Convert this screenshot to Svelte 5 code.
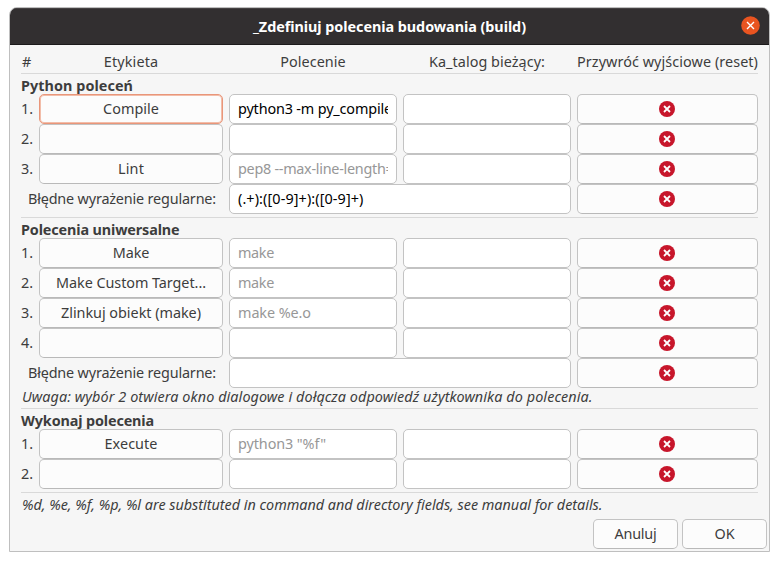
<script>
  const sections = [
    {
      title: 'Python poleceń', titleWidth: 112,
      rows: [
        { n: '1.', label: 'Compile', lw: 56, cmd: 'python3 -m py_compile', cw: 154, focused: true },
        { n: '2.', label: '', cmd: '' },
        { n: '3.', label: 'Lint', lw: 26, cmd: 'pep8 --max-line-length=', cw: 155.5, hint: true },
      ],
      regex: '(.+):([0-9]+):([0-9]+)', regexWidth: 125.5, hasRegex: true,
    },
    {
      title: 'Polecenia uniwersalne', titleWidth: 158.5,
      rows: [
        { n: '1.', label: 'Make', lw: 36.5, cmd: 'make', cw: 36, hint: true },
        { n: '2.', label: 'Make Custom Target...', lw: 150, cmd: 'make', cw: 36, hint: true },
        { n: '3.', label: 'Zlinkuj obiekt (make)', lw: 140, cmd: 'make %e.o', cw: 73, hint: true },
        { n: '4.', label: '', cmd: '' },
      ],
      regex: '', hasRegex: true,
      note: 'Uwaga: wybór 2 otwiera okno dialogowe i dołącza odpowiedź użytkownika do polecenia.', noteWidth: 570.5,
    },
    {
      title: 'Wykonaj polecenia', titleWidth: 133,
      rows: [
        { n: '1.', label: 'Execute', lw: 53, cmd: 'python3 "%f"', cw: 88, hint: true },
        { n: '2.', label: '', cmd: '' },
      ],
      hasRegex: false,
    },
  ];

  // Tracks the letters of a label so that it takes up the given advance width.
  function track(node, width) {
    if (!width) return;
    const natural = node.getBoundingClientRect().width;
    const count = [...node.textContent].length;
    if (count) node.style.letterSpacing = `${(width - natural) / count}px`;
  }
</script>

{#snippet text(value, width)}<span class="text" use:track={width}>{value}</span>{/snippet}

{#snippet reset()}
  <button class="btn reset" aria-label="reset">
    <svg width="16" height="16" viewBox="0 0 16 16">
      <circle cx="8" cy="8" r="8" fill="#c7162b" />
      <path d="M5 5l6 6M11 5l-6 6" stroke="#fff" stroke-width="1.8" />
    </svg>
  </button>
{/snippet}

<div class="window">
  <header>
    <h1>{@render text('_Zdefiniuj polecenia budowania (build)', 273)}</h1>
    <button class="close" aria-label="close">
      <svg width="19" height="19" viewBox="0 0 19 19">
        <circle cx="9.5" cy="9.5" r="9.3" fill="#e95420" />
        <path d="M6 6l7 7M13 6l-7 7" stroke="#fff" stroke-width="1.4" />
      </svg>
    </button>
  </header>

  <main>
    <div class="grid head">
      <span class="num">#</span>
      <span>{@render text('Etykieta', 54.5)}</span>
      <span>{@render text('Polecenie', 65.5)}</span>
      <span>{@render text('Ka_talog bieżący:', 116)}</span>
      <span>{@render text('Przywróć wyjściowe (reset)', 181)}</span>
    </div>
    {#each sections as s}
      <section>
        <h2>{@render text(s.title, s.titleWidth)}</h2>
        {#each s.rows as r}
          <div class="grid">
            <span class="num">{@render text(r.n, 12)}</span>
            <button class="btn" class:focused={r.focused}>{@render text(r.label, r.lw)}</button>
            <div class="entry" class:hint={r.hint}><div class="clip">{@render text(r.cmd, r.cw)}</div></div>
            <div class="entry"></div>
            {@render reset()}
          </div>
        {/each}
        {#if s.hasRegex}
          <div class="grid">
            <span class="regex-label">{@render text('Błędne wyrażenie regularne:', 188)}</span>
            <div class="entry wide"><div class="clip">{@render text(s.regex, s.regexWidth)}</div></div>
            {@render reset()}
          </div>
        {/if}
        {#if s.note}<p class="note">{@render text(s.note, s.noteWidth)}</p>{/if}
      </section>
    {/each}
    <p class="help">{@render text('%d, %e, %f, %p, %l are substituted in command and directory fields, see manual for details.', 580.5)}</p>
  </main>

  <footer>
    <button class="btn">{@render text('Anuluj', 42)}</button>
    <button class="btn">{@render text('OK', 20)}</button>
  </footer>
</div>

<style>
  :global(body) { background: #fff; }
  .window {
    box-sizing: border-box;
    width: 761px;
    height: 545px;
    margin: 7px 0 0 9px;
    border: 1px solid #bfbfbf;
    border-radius: 8px 8px 0 0;
    background: #f6f6f6;
    overflow: hidden;
    display: flex;
    flex-direction: column;
    font: 14.4px/20px "Noto Sans", "Open Sans", sans-serif;
    color: #3d3d3d;
  }
  h1, h2, p { margin: 0; font-size: inherit; }
  .text { white-space: pre; display: inline-block; }
  button { font: inherit; color: inherit; padding: 0; margin: 0; }
  header {
    box-sizing: border-box;
    height: 37px;
    flex: none;
    display: grid;
    grid-template-columns: 30px 1fr 30px;
    align-items: center;
    background: #322f30;
    border-bottom: 1px solid #1c1a1b;
    box-shadow: inset 0 1px #454243;
    color: #fff;
  }
  h1 { grid-column: 2; text-align: center; padding-top: 1px; }
  .close { border: 0; background: none; width: 19px; height: 19px; margin: -1px 0 0 2px; }
  svg { display: block; }
  main { padding: 0 11px; }
  .grid {
    display: grid;
    grid-template-columns: 12px 184px 168px 168px 181px;
    column-gap: 6px;
    height: 30px;
    align-items: center;
    text-align: center;
    white-space: nowrap;
  }
  .head { height: 28px; padding-top: 6px; box-sizing: border-box; }
  .head span { display: flex; justify-content: center; }
  .grid .num { text-align: left; justify-content: flex-start; }
  .head .num { padding-left: 1px; }
  section { border-top: 1px solid #d9d9d9; margin-bottom: 3px; }
  h2 { height: 20px; line-height: 23px; white-space: nowrap; }
  .btn, .entry {
    box-sizing: border-box;
    height: 30px;
    border: 1px solid #c3c3c3;
    border-radius: 5px;
    background: #fcfcfc;
    display: flex;
    align-items: center;
    justify-content: center;
    min-width: 0;
  }
  .btn { border-bottom-color: #b9b9b9; }
  .reset { padding-right: 1px; }
  .focused { border-color: #e9967a; box-shadow: inset 0 0 0 1px #f2bda9; }
  .entry { background: #fff; justify-content: flex-start; padding: 0 8px; color: #000; }
  .clip { overflow: hidden; width: 100%; text-align: left; }
  .hint { color: #979797; }
  .wide { grid-column: 3 / 5; }
  .regex-label { grid-column: 1 / 3; text-align: center; }
  .note { height: 17px; line-height: 17px; padding-left: 1px; font-style: italic; }
  .help { border-top: 1px solid #d9d9d9; padding: 1px 0 0 1px; height: 25px; line-height: 21px; font-style: italic; }
  .note, .help { white-space: nowrap; }
  footer { display: flex; justify-content: flex-end; gap: 4px; padding-right: 2px; }
  footer .btn { width: 85px; }
</style>
